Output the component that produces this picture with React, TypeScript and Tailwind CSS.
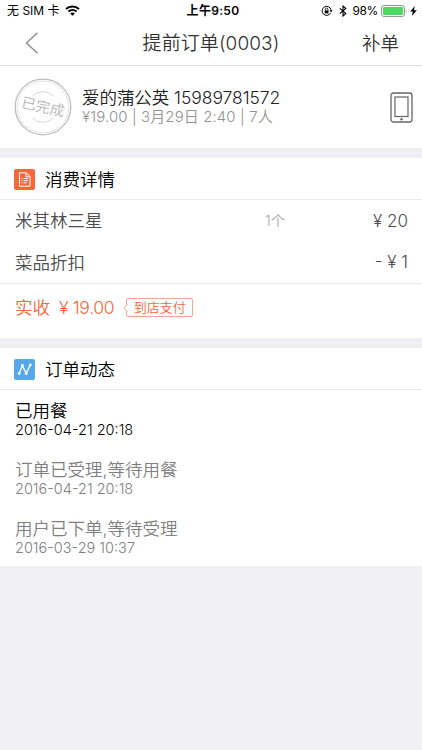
import type { ReactNode } from "react";

const items = [
  { name: "米其林三星", count: "1个", price: "¥ 20" },
  { name: "菜品折扣", count: "", price: "- ¥ 1" },
];

const logs = [
  { title: "已用餐", time: "2016-04-21 20:18", active: true },
  { title: "订单已受理,等待用餐", time: "2016-04-21 20:18", active: false },
  { title: "用户已下单,等待受理", time: "2016-03-29 10:37", active: false },
];

function StatusBar() {
  return (
    <div className="grid h-[21px] grid-cols-3 items-center pl-[7px] pr-[5px] text-[12px] font-normal leading-none text-black">
      <div className="flex items-center gap-[5px] whitespace-nowrap">
        <span>无 SIM 卡</span>
        <svg width="15" height="11" viewBox="0 0 15 11" fill="none" stroke="#000" strokeWidth="2">
          <path d="M1 4.1C4.7.6 10.3.6 14 4.1" />
          <path d="M3.4 6.6c2.4-2.2 5.8-2.2 8.2 0" />
          <path d="M7.5 10.8 5.2 8.5c1.3-1.2 3.3-1.2 4.6 0z" fill="#000" stroke="none" />
        </svg>
      </div>
      <div className="pl-[2px] text-center font-semibold tracking-[0.3px]">上午9:50</div>
      <div className="flex items-center justify-end whitespace-nowrap">
        <svg className="mr-[6px]" width="12" height="12" viewBox="0 0 12 12" fill="none" stroke="#000">
          <path d="M9.7 7.8A4.5 4.5 0 1 1 10 4.8" />
          <path d="M8.3 5.3h3.4L10 7.3z" fill="#000" stroke="none" />
          <path d="M3.7 5.4h3.8v3H3.7z" fill="#000" stroke="none" />
          <path d="M4.4 5.6V4.3a1.2 1.2 0 0 1 2.4 0v1.3" strokeWidth=".8" />
        </svg>
        <svg className="mr-[6px]" width="8" height="12" viewBox="0 0 8 12" fill="none" stroke="#000" strokeWidth="1.1">
          <path d="m.8 3.3 6 5.2L4 11V1l2.8 2.5-6 5.2" />
        </svg>
        <span className="mr-[3px] tracking-[-0.4px]">98%</span>
        <svg className="mr-[3px]" width="26" height="12" viewBox="0 0 26 12">
          <rect x=".5" y=".5" width="23" height="11" rx="2.5" fill="#fff" stroke="#999" />
          <rect x="2" y="2" width="20" height="8" rx="1" fill="#4cd964" />
          <path d="M24.7 4v4c1-.4 1-3.6 0-4z" fill="#999" />
        </svg>
        <svg width="7" height="10" viewBox="0 0 7 10">
          <path d="M4.8 0 .2 5.6h2.6L1.9 10l4.9-5.8H4z" />
        </svg>
      </div>
    </div>
  );
}

function Stamp() {
  return (
    <svg className="shrink-0" width="58" height="58" viewBox="0 0 58 58" fill="none">
      <circle cx="29" cy="29" r="27.8" stroke="#bdbdbd" strokeWidth="1.3" />
      <circle cx="29" cy="29" r="25.8" stroke="#dadada" strokeWidth=".8" />
      <path d="M18.5 18a15 15 0 0 1 21 0M18.5 40a15 15 0 0 0 21 0" stroke="#ccc" strokeWidth=".8" />
      <text x="29" y="34" textAnchor="middle" fontSize="14.5" fontWeight="400" fill="#bbb" transform="rotate(12 29 29)">
        已完成
      </text>
    </svg>
  );
}

function SectionHeader({ icon, title }: { icon: ReactNode; title: string }) {
  return (
    <div className="flex h-[42px] items-center gap-[10px] border-b border-[#e9e9ec] px-[14px] pt-px text-[17.5px] text-black">
      {icon}
      <h2 className="pt-[2px]">{title}</h2>
    </div>
  );
}

export default function App() {
  return (
    <div className="min-h-[750px] w-[422px] bg-[#efeff4] font-['Inter','Noto_Sans_CJK_SC',sans-serif] font-[350]">
      <header className="h-[66px] border-b border-[#dedede] bg-white">
        <StatusBar />
        <div className="grid h-[44px] grid-cols-[60px_1fr_60px] items-center text-[#333]">
          <svg className="ml-[25px]" width="14" height="22" viewBox="0 0 14 22" fill="none" stroke="#888" strokeWidth="1.3">
            <path d="M12.5.8 1.5 11l11 10.2" />
          </svg>
          <h1 className="pt-[3px] text-center text-[19px] tracking-[0.08px]">提前订单(0003)</h1>
          <span className="pt-px text-[18.5px]">补单</span>
        </div>
      </header>

      <section className="flex h-[82px] items-center bg-white pl-[14px] pr-[9px]">
        <Stamp />
        <div className="ml-[10px] flex-1">
          <div className="text-[17.5px] leading-[20px] tracking-[-0.05px] text-[#222]">爱的蒲公英 15989781572</div>
          <div className="-mt-px text-[15px] leading-[19px] tracking-[0.1px] text-[#939393]">¥19.00 | 3月29日 2:40 | 7人</div>
        </div>
        <svg width="23" height="31" viewBox="0 0 23 31" fill="none" stroke="#666">
          <rect x="1" y="1" width="21" height="29" rx="2.5" strokeWidth="1.3" />
          <rect x="5" y="5" width="13" height="19.5" strokeWidth="1.2" />
          <circle cx="11.5" cy="27.2" r="1.2" fill="#666" stroke="none" />
        </svg>
      </section>

      <section className="mt-[10px] bg-white">
        <SectionHeader
          title="消费详情"
          icon={
            <svg width="21" height="21" viewBox="0 0 21 21" fill="none" stroke="#fff">
              <rect width="21" height="21" rx="2" fill="#f9683a" stroke="none" />
              <path d="M5.5 3.8h6.8l3.7 3.7v9.7H5.5zM12 4v3.8h3.8" />
              <path d="M7.5 9.5h1m1.2 0H14M7.5 11.7h1m1.2 0H14M7.5 13.9h1m1.2 0h3" strokeWidth=".9" />
            </svg>
          }
        />
        <div className="border-b border-[#e9e9ec] px-[14px] text-[17.5px] text-[#4d4d4d]">
          {items.map((item) => (
            <div key={item.name} className="flex h-[41.5px] items-center pt-px">
              <span className="w-[251px] pl-px">{item.name}</span>
              <span className="text-[14.5px] text-[#aaa]">{item.count}</span>
              <span className="ml-auto text-[17px]">{item.price}</span>
            </div>
          ))}
        </div>
        <div className="flex h-[54px] items-start pl-[15px] pr-[14px] pt-[11px] text-[17.5px] text-[#f0653a]">
          <span>实收</span>
          <span className="ml-[9px] tracking-[-0.3px]">¥ 19.00</span>
          <span className="relative ml-[12px] mt-[3px] h-[19px] w-[67px] rounded-[2px] border border-[#f3a78f] text-center text-[13px] leading-[17px]">
            到店支付
            <svg className="absolute -left-[4px] top-[5px]" width="5" height="8" viewBox="0 0 5 8">
              <path d="M4.5 0 .8 4l3.7 4" fill="#fff" stroke="#f3a78f" />
            </svg>
          </span>
        </div>
      </section>

      <section className="mt-[10px] bg-white">
        <SectionHeader
          title="订单动态"
          icon={
            <svg width="21" height="21" viewBox="0 0 21 21" fill="none" stroke="#fff">
              <rect width="21" height="21" rx="2" fill="#55a8ea" stroke="none" />
              <path d="M5.2 14.5 8.4 6.5l3.8 8L16.3 6" strokeWidth="1.3" />
              <g fill="#fff" stroke="none">
                <circle cx="5.2" cy="14.5" r="1.4" />
                <circle cx="8.4" cy="6.5" r="1.4" />
                <circle cx="12.2" cy="14.5" r="1.4" />
                <circle cx="16.3" cy="6" r="1.4" />
              </g>
            </svg>
          }
        />
        <div className="flex h-[176px] flex-col gap-[22px] pl-[15px] pt-[11px]">
          {logs.map((log) => (
            <div key={log.title} className={log.active ? "text-black" : "text-[#808080]"}>
              <div className="text-[17.5px] leading-[20px]">{log.title}</div>
              <div className="text-[14.5px] leading-[17px]">{log.time}</div>
            </div>
          ))}
        </div>
      </section>
    </div>
  );
}
